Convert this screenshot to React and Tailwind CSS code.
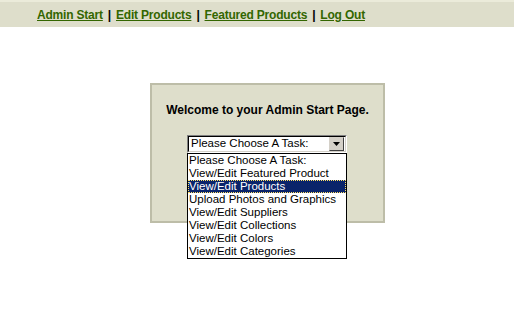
import { useState } from "react";

const tasks = [
  "Please Choose A Task:",
  "View/Edit Featured Product",
  "View/Edit Products",
  "Upload Photos and Graphics",
  "View/Edit Suppliers",
  "View/Edit Collections",
  "View/Edit Colors",
  "View/Edit Categories",
];

const navLinks = ["Admin Start", "Edit Products", "Featured Products", "Log Out"];

export default function App() {
  const [active] = useState(2);

  return (
    <div className="min-h-[318px] w-full bg-white font-['Liberation_Sans',Arial,sans-serif]">
      {/* top nav bar */}
      <div className="flex h-[27px] items-center border-t-2 border-[#ebebda] bg-[#dedecb] pl-[37px] text-[12px] font-bold tracking-[-0.2px]">
        {navLinks.map((label, i) => (
          <span key={label} className="flex items-center">
            {i > 0 && <span className="px-[5px] text-black">|</span>}
            <a href="#" className="text-[#336600] underline">
              {label}
            </a>
          </span>
        ))}
      </div>

      {/* admin box */}
      <div className="ml-[150px] mt-[56px] h-[140px] w-[235px] border-2 border-[#bdbda8] bg-[#dedecb]">
        <p className="mt-[16px] text-center text-[12px] font-bold text-black">
          Welcome to your Admin Start Page.
        </p>

        <div className="relative ml-[35px] mt-[16px] w-[160px]">
          {/* closed select */}
          <div className="flex h-[18px] items-center border border-t-[#808080] border-l-[#808080] border-r-white border-b-white">
            <div className="flex h-full flex-1 items-center border border-t-black border-l-black border-r-[#d4d0c8] border-b-[#d4d0c8] bg-white pl-[2px] pr-[1px]">
              <span className="flex-1 text-[11.5px] leading-none text-black">Please Choose A Task:</span>
              <div className="flex h-[14px] w-[15px] items-center justify-center border border-t-[#d4d0c8] border-l-[#d4d0c8] border-r-[#404040] border-b-[#404040] bg-[#d4d0c8]">
                <svg width="7" height="4" viewBox="0 0 7 4">
                  <path d="M0 0h7L3.5 4z" fill="#000" />
                </svg>
              </div>
            </div>
          </div>

          {/* open list */}
          <ul className="absolute left-0 top-[18px] w-[160px] border border-black bg-white">
            {tasks.map((t, i) => (
              <li
                key={t}
                className={
                  i === active
                    ? "h-[13px] bg-[#0a246a] pl-[1px] text-[11.5px] leading-[13px] text-white outline-1 outline-dotted outline-offset-[-1px] outline-[#ffe066]"
                    : "h-[13px] pl-[1px] text-[11.5px] leading-[13px] text-black"
                }
              >
                {t}
              </li>
            ))}
          </ul>
        </div>
      </div>
    </div>
  );
}
